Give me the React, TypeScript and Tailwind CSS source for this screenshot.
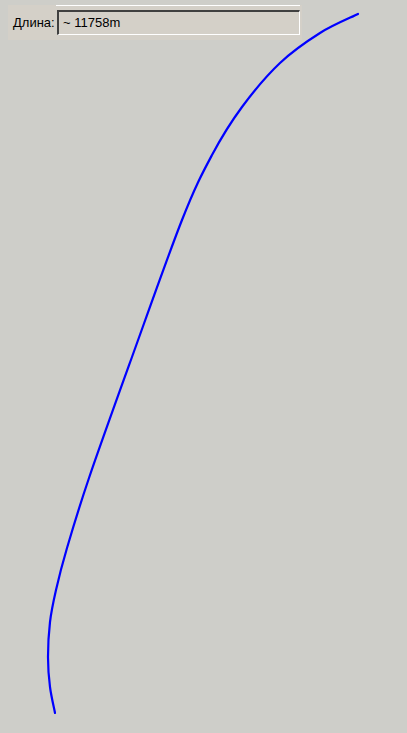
const track: [number, number][] = [
  [358, 14], [320, 33], [280, 63], [242, 107], [212, 155], [182, 220],
  [132, 357], [89, 478], [67, 548], [56, 590], [50, 622], [48, 657],
  [50, 687], [55, 713],
];

// catmull-rom -> cubic bezier so the route looks smooth
function smoothPath(pts: [number, number][]) {
  let d = `M${pts[0][0]},${pts[0][1]}`;
  for (let i = 0; i < pts.length - 1; i++) {
    const p0 = pts[i - 1] ?? pts[i];
    const p1 = pts[i];
    const p2 = pts[i + 1];
    const p3 = pts[i + 2] ?? p2;
    const c1x = p1[0] + (p2[0] - p0[0]) / 6;
    const c1y = p1[1] + (p2[1] - p0[1]) / 6;
    const c2x = p2[0] - (p3[0] - p1[0]) / 6;
    const c2y = p2[1] - (p3[1] - p1[1]) / 6;
    d += ` C${c1x.toFixed(1)},${c1y.toFixed(1)} ${c2x.toFixed(1)},${c2y.toFixed(1)} ${p2[0]},${p2[1]}`;
  }
  return d;
}

export default function App() {
  return (
    <div className="relative w-[407px] h-[733px] bg-[#cecec9] overflow-hidden font-['Liberation_Sans',Arial,sans-serif]">
      {/* route drawn on the map canvas */}
      <svg className="absolute inset-0" width="407" height="733" viewBox="0 0 407 733">
        <path
          d={smoothPath(track)}
          fill="none"
          stroke="#0000ff"
          strokeWidth="2.2"
          strokeLinecap="round"
        />
      </svg>

      {/* length panel */}
      <div className="absolute left-[8px] top-[5px] w-[294px] h-[35px] bg-[#d4d0c8]">
        <div className="ml-[48px] mr-[2px] h-px bg-white" />
        <div className="flex items-center h-[34px] pb-[2px]">
          <span className="pl-[5px] w-[49px] text-[13px] text-black leading-none">Длина:</span>
          <div className="flex items-center w-[243px] h-[25px] border-t-2 border-l-2 border-t-[#404040] border-l-[#404040] border-b border-r border-b-white border-r-white bg-[#d4d0c8] pl-[4px] text-[13px] text-black leading-none">
            ~ 11758m
          </div>
        </div>
      </div>
    </div>
  );
}
